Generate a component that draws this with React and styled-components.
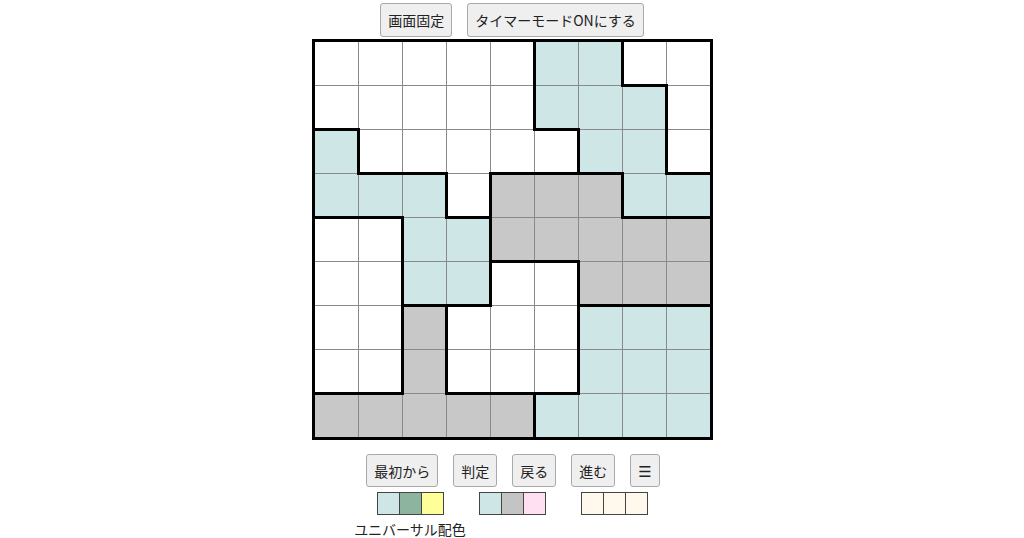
import React from 'react';
import styled, { createGlobalStyle } from 'styled-components';

const REGIONS = [
    'AAAAABBCC',
    'AAAAABBBC',
    'DAAAAABBC',
    'DDDAEEEBB',
    'FFDDEEEEE',
    'FFDDGGEEE',
    'FFHGGGIII',
    'FFHGGGIII',
    'HHHHHIIII'
];

const REGION_FILL = {
    A: 'white',
    B: 'blue',
    C: 'white',
    D: 'blue',
    E: 'gray',
    F: 'white',
    G: 'white',
    H: 'gray',
    I: 'blue'
};

const FILLS = {
    white: '#ffffff',
    blue: '#cfe6e7',
    gray: '#c8c8c8'
};

const PALETTES = [
    { id: 'universal', colors: ['#cfe6e7', '#8cb49f', '#ffff99'], label: 'ユニバーサル配色' },
    { id: 'default', colors: ['#cfe6e7', '#c4c4c4', '#ffe0f2'] },
    { id: 'blank', colors: ['#fff9ed', '#fff9ed', '#fff9ed'] }
];

export default function App() {
    const renderCells = () => {
        const cells = [];
        for (let y = 0; y < 9; y++) {
            for (let x = 0; x < 9; x++) {
                const region = REGIONS[y][x];
                const thickRight = x < 8 && REGIONS[y][x + 1] !== region;
                const thickBottom = y < 8 && REGIONS[y + 1][x] !== region;
                cells.push(
                    <Cell
                        key={`${x}-${y}`}
                        $fill={FILLS[REGION_FILL[region]]}
                        $right={thickRight}
                        $bottom={thickBottom}
                    />
                );
            }
        }
        return cells;
    };

    return (
        <Page>
            <GlobalStyle />
            <Toolbar>
                <Button>画面固定</Button>
                <Button>タイマーモードONにする</Button>
            </Toolbar>
            <Board>{renderCells()}</Board>
            <Controls>
                <Button $small>最初から</Button>
                <Button $small>判定</Button>
                <Button $small>戻る</Button>
                <Button $small>進む</Button>
                <Button $small $menu>☰</Button>
            </Controls>
            <Palettes>
                {PALETTES.map(palette => (
                    <PaletteGroup key={palette.id}>
                        <Swatches>
                            {palette.colors.map((color, i) => (
                                <Swatch key={i} $color={color} />
                            ))}
                        </Swatches>
                        {palette.label && <PaletteLabel>{palette.label}</PaletteLabel>}
                    </PaletteGroup>
                ))}
            </Palettes>
        </Page>
    );
}

const GlobalStyle = createGlobalStyle`
    body {
        margin: 0;
        background: #fff;
        font-family: "Noto Sans CJK JP", "Noto Sans", sans-serif;
        color: #222;
    }
`;

const Page = styled.div`
    display: flex;
    flex-direction: column;
    align-items: center;
    padding-top: 3px;
`;

const Toolbar = styled.div`
    display: flex;
    gap: 15px;
    margin-bottom: 2px;
`;

const Controls = styled.div`
    display: flex;
    gap: 15px;
    margin-top: 14px;
    margin-left: 2px;
`;

const Button = styled.button`
    height: ${props => (props.$small ? '33px' : '34px')};
    padding: 0 7px;
    border: 1px solid #a9a9a9;
    border-radius: 3px;
    background: #efefef;
    color: #222;
    font-family: "Noto Sans CJK JP", "DejaVu Sans", sans-serif;
    font-size: ${props => (props.$menu ? '15px' : '14px')};
    line-height: 1;
    white-space: nowrap;
    cursor: pointer;
`;

const Board = styled.div`
    display: grid;
    grid-template-columns: repeat(9, 43px);
    grid-template-rows: repeat(9, 43px);
    gap: 1px;
    background: #8a8a8a;
    border: 3px solid #000;
`;

const Cell = styled.div`
    position: relative;
    background: ${props => props.$fill};

    &::before {
        content: '';
        display: ${props => (props.$right ? 'block' : 'none')};
        position: absolute;
        top: -2px;
        bottom: -2px;
        right: -2px;
        width: 3px;
        background: #000;
        z-index: 1;
    }

    &::after {
        content: '';
        display: ${props => (props.$bottom ? 'block' : 'none')};
        position: absolute;
        left: -2px;
        right: -2px;
        bottom: -2px;
        height: 3px;
        background: #000;
        z-index: 1;
    }
`;

const Palettes = styled.div`
    display: flex;
    align-items: flex-start;
    gap: 35px;
    margin-top: 5px;
`;

const PaletteGroup = styled.div`
    display: flex;
    flex-direction: column;
    align-items: center;
`;

const Swatches = styled.div`
    display: flex;
    border: 1px solid #444;
`;

const Swatch = styled.div`
    width: 21px;
    height: 21px;
    background: ${props => props.$color};

    & + & {
        border-left: 1px solid #444;
    }
`;

const PaletteLabel = styled.div`
    margin: 6px -30px 0;
    font-size: 14px;
    line-height: 16px;
    white-space: nowrap;
    text-align: center;
    color: #222;
`;
